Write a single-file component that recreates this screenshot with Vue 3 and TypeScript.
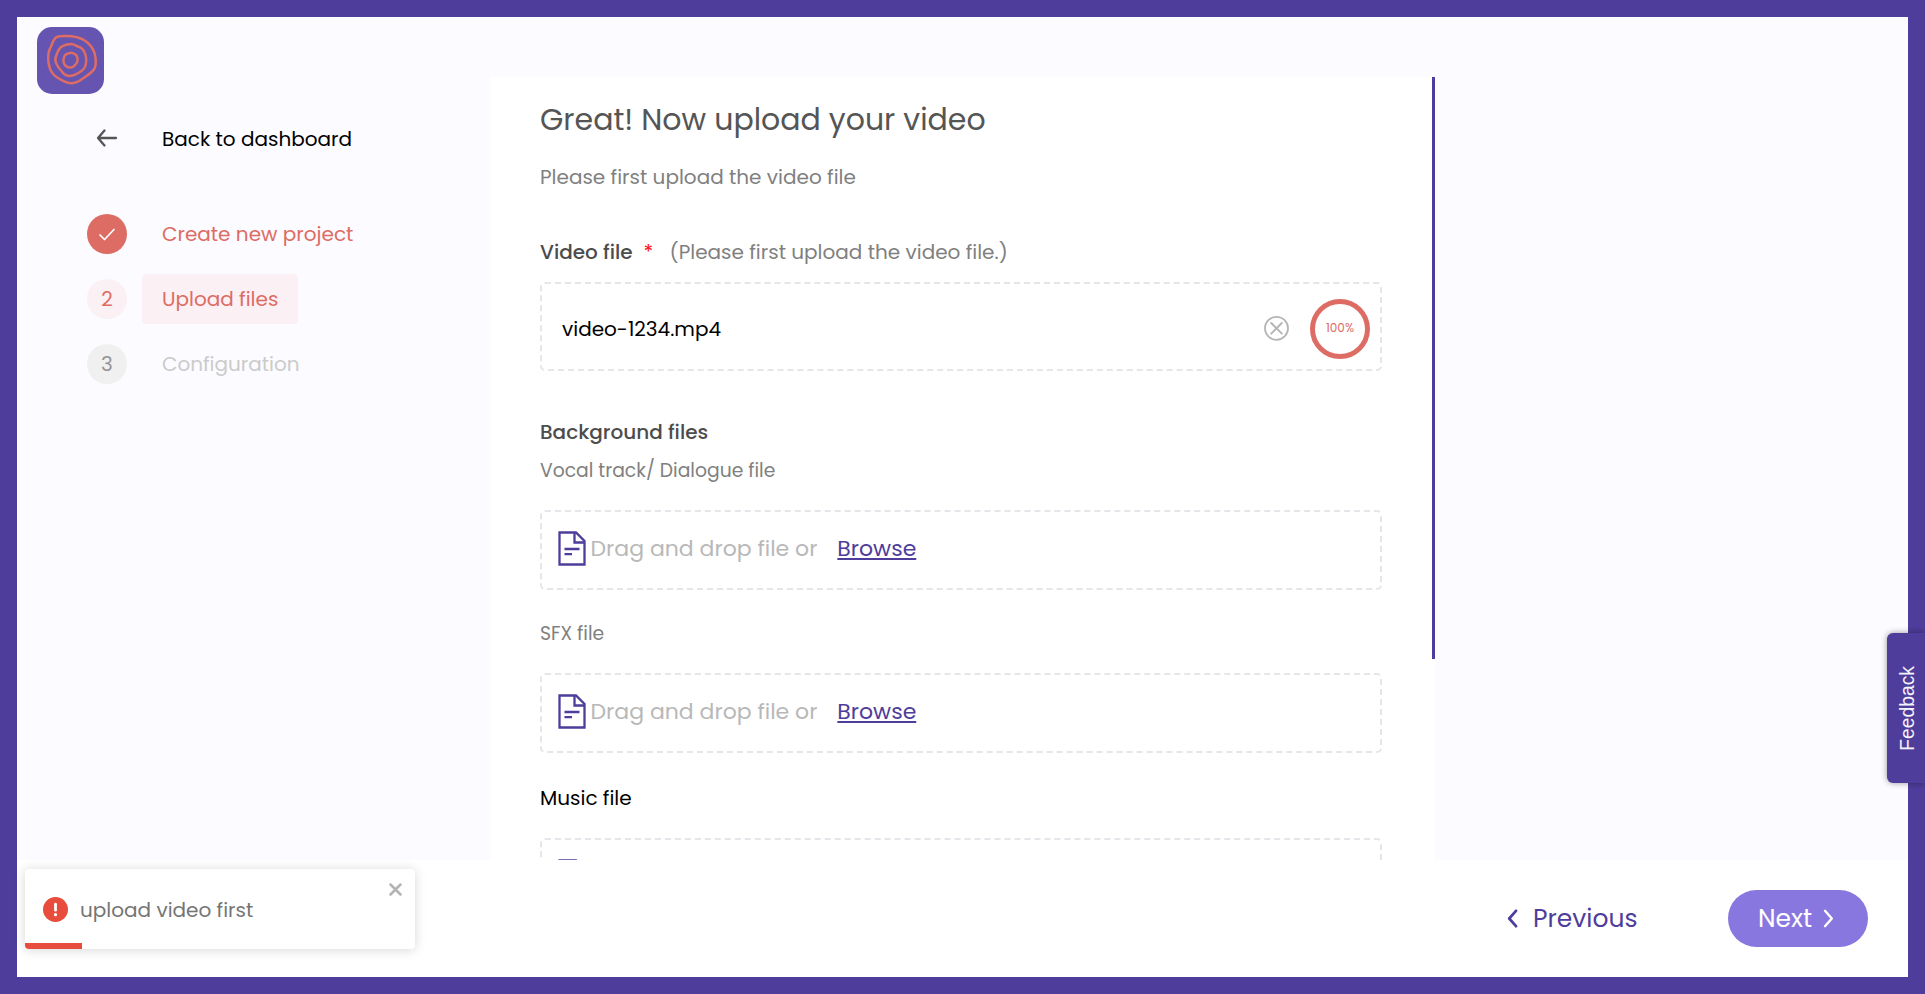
<script setup lang="ts">
interface Step {
  id: number
  label: string
  state: 'done' | 'active' | 'pending'
}

interface Track {
  key: string
  label: string
  prompt: boolean
}

const steps: Step[] = [
  { id: 1, label: 'Create new project', state: 'done' },
  { id: 2, label: 'Upload files', state: 'active' },
  { id: 3, label: 'Configuration', state: 'pending' },
]

const tracks: Track[] = [
  { key: 'vocal', label: 'Vocal track/ Dialogue file', prompt: true },
  { key: 'sfx', label: 'SFX file', prompt: true },
  { key: 'music', label: 'Music file', prompt: false },
]
</script>

<template>
  <div class="frame">
    <div class="main">
      <aside class="sidebar">
        <svg class="logo" viewBox="0 0 67 67">
          <rect width="67" height="67" rx="15" fill="#6554b0" />
          <g fill="none" stroke="#dd6c64" stroke-width="2.5" stroke-linejoin="round">
            <path d="M21 9.500C26 8.500 31 9 35 9.300C41 10 47 12.500 51 16C56 20.500 58 25 58.500 31C59 35 59 39 57.200 42C55 45.500 52 47.500 48 50C43.500 53.500 40 56 34.700 56.300C29 56 25.500 53.500 21 51C17 48.500 14 45.500 12.800 41C11.500 37 11 35 11.200 31C11.300 27 11.500 24 13.300 21C15 18 15.200 15.500 17 12.800C18 11 19 10 21 9.500Z" />
            <path d="M34 17C30 17 27 18 24.300 19.700C21.500 22 20.500 25 19.500 28C18 31 17.800 33 19 36C20.500 39.500 22.500 42 25 44.700C27.500 48 29.500 49 32.500 49C37 48.500 41 46.500 44.700 43.700C48 41.500 48.700 39 49 36C49.500 32 49 28 47.300 24.700C46 22 45 20.700 42 19.900C39 19 37.500 17 34 17Z" />
            <path d="M33.300 25.900C30.500 26.200 28.500 27 27.500 29C26.300 31.500 26.200 34 26.900 36.300C28 39 30.500 40.500 33.300 40.600C36 40.800 37.500 39 39 37C40.300 35.300 40.900 33.500 40.600 31.500C40.300 29.500 39.500 28 38 27.200C36.500 26.200 35 25.700 33.300 25.900Z" />
          </g>
        </svg>

        <nav class="nav">
          <a class="row back">
            <span class="marker">
              <svg width="22" height="20" viewBox="0 0 22 20" fill="none" stroke="#555" stroke-width="2.3" stroke-linecap="round" stroke-linejoin="round">
                <path d="M20 10H2.500M8.500 2.500L2 10L8.500 17.500" />
              </svg>
            </span>
            <span class="label">Back to dashboard</span>
          </a>
          <div v-for="step in steps" :key="step.id" class="row" :class="step.state">
            <span class="marker">
              <svg v-if="step.state === 'done'" width="16" height="13" viewBox="0 0 16 13" fill="none" stroke="#fff" stroke-width="1.700" stroke-linecap="round" stroke-linejoin="round">
                <path d="M1 7L5.500 11.500L15 1.500" />
              </svg>
              <template v-else>{{ step.id }}</template>
            </span>
            <span class="label">{{ step.label }}</span>
          </div>
        </nav>
      </aside>

      <section class="panel">
        <h1>Great! Now upload your video</h1>
        <p class="sub">Please first upload the video file</p>

        <div class="field-title">
          <strong>Video file</strong>
          <span class="star">*</span>
          <span class="hint">(Please first upload the video file.)</span>
        </div>
        <div class="box uploaded">
          <span class="filename">video-1234.mp4</span>
          <svg class="remove" width="25" height="26" viewBox="0 0 25 26" fill="none" stroke="#b5b5b5" stroke-linecap="round">
            <circle cx="12.500" cy="13.300" r="11.500" stroke-width="1.800" />
            <path d="M7.200 8L17.800 18.600M17.800 8L7.200 18.600" stroke-width="1.900" />
          </svg>
          <span class="ring">100%</span>
        </div>

        <strong class="group">Background files</strong>
        <div v-for="track in tracks" :key="track.key" class="track" :class="track.key">
          <div class="track-label">{{ track.label }}</div>
          <div class="box drop">
            <svg width="28" height="35" viewBox="0 0 28 35" fill="none" stroke="#4f3d9b" stroke-width="2.300">
              <path d="M1.500 1.500H18L26.500 10V33.500H1.500Z" />
              <path d="M16.500 1.500V11.500H26.500" />
              <path d="M6.500 18H21.500M6.500 23.200H14" />
            </svg>
            <template v-if="track.prompt">
              <span class="drag">Drag and drop file or</span>
              <a class="browse">Browse</a>
            </template>
          </div>
        </div>
        <i class="thumb"></i>
      </section>
    </div>

    <footer class="footer">
      <button class="prev">
        <svg width="11" height="19" viewBox="0 0 11 19" fill="none" stroke="#4f3d9b" stroke-width="2.700" stroke-linecap="round" stroke-linejoin="round">
          <path d="M9 1.800L2.200 9.500L9 17.200" />
        </svg>
        <span>Previous</span>
      </button>
      <button class="next">
        <span>Next</span>
        <svg width="11" height="19" viewBox="0 0 11 19" fill="none" stroke="#fff" stroke-width="2.400" stroke-linecap="round" stroke-linejoin="round">
          <path d="M2 1.800L8.800 9.500L2 17.200" />
        </svg>
      </button>
    </footer>

    <div class="feedback"><span>Feedback</span></div>

    <div class="toast">
      <svg width="25" height="25" viewBox="0 0 25 25">
        <circle cx="12.500" cy="12.500" r="12.500" fill="#e74c3c" />
        <path d="M12.500 7.200V13.200" stroke="#fff" stroke-width="2.800" stroke-linecap="round" />
        <circle cx="12.500" cy="17.700" r="1.600" fill="#fff" />
      </svg>
      <span class="toast-text">upload video first</span>
      <svg class="close" width="13" height="13" viewBox="0 0 13 13" stroke="#b3b3b3" stroke-width="2.500" stroke-linecap="round">
        <path d="M1.500 1.500L11.500 11.500M11.500 1.500L1.500 11.500" />
      </svg>
      <i class="progress"></i>
    </div>
  </div>
</template>

<style>
body {
  margin: 0;
  overflow: hidden;
}
</style>

<style scoped>
.frame {
  position: relative;
  box-sizing: border-box;
  width: 1925px;
  height: 994px;
  border: 17px solid #4f3d9b;
  background: #fff;
  font-family: Poppins, Inter, "Open Sans", sans-serif;
  font-size: 20px;
  color: #000;
  white-space: nowrap;
}
.main {
  display: flex;
  height: 843px;
  background: #fcfbff;
}
.sidebar {
  width: 473px;
}
.logo {
  display: block;
  width: 67px;
  height: 67px;
  margin: 10px 0 0 20px;
}
.nav {
  display: flex;
  flex-direction: column;
  gap: 15px;
  margin: 19px 0 0 70px;
}
.row {
  display: flex;
  align-items: center;
  gap: 15px;
  height: 50px;
}
.back {
  margin-bottom: 16px;
  padding-bottom: 15px;
}
.back .label {
  padding-top: 1px;
}
.marker {
  display: flex;
  align-items: center;
  justify-content: center;
  width: 40px;
  height: 40px;
  border-radius: 50%;
}
.label {
  box-sizing: border-box;
  height: 50px;
  padding: 0 20px;
  border-radius: 4px;
  line-height: 50px;
}
.done .marker {
  background: #dd6c64;
}
.done .label {
  color: #dd6c64;
}
.active .marker,
.active .label {
  background: #fbf0f3;
  color: #dd6c64;
}
.pending .marker {
  background: #f0f0f0;
  color: #949494;
}
.pending .label {
  color: #cbcbcb;
}
.panel {
  position: relative;
  box-sizing: border-box;
  width: 945px;
  margin-top: 60px;
  padding: 20px 53px 0 50px;
  overflow: hidden;
  background: #fff;
}
h1 {
  margin: 0;
  font-size: 30px;
  font-weight: 400;
  line-height: 45px;
  color: #555;
}
.sub {
  margin: 20px 0 45px;
  line-height: 30px;
  color: #808080;
}
.field-title {
  display: flex;
  margin-bottom: 15px;
  line-height: 30px;
}
strong {
  font-weight: 500;
  color: #4c4c4c;
}
.star {
  width: 26px;
  margin-left: 11px;
  color: #f11;
}
.hint {
  color: #808080;
}
.box {
  box-sizing: border-box;
  display: flex;
  align-items: center;
  border: 2px dashed #e5e5ea;
  border-radius: 5px;
}
.uploaded {
  height: 89px;
  padding: 3px 10px 0 20px;
}
.filename {
  margin-top: 2px;
}
.remove {
  margin: 0 21.500px 0 auto;
}
.ring {
  box-sizing: border-box;
  width: 60px;
  height: 60px;
  margin-top: 2px;
  border: 5px solid #dd6c64;
  border-radius: 50%;
  line-height: 48px;
  text-align: center;
  font-size: 12px;
  color: #dd6c64;
}
.group {
  display: block;
  margin: 46px 0 10px;
  line-height: 30px;
}
.track {
  margin-bottom: 30px;
}
.track-label {
  margin-bottom: 26px;
  font-size: 18.750px;
  line-height: 27px;
  color: #808080;
}
.music .track-label {
  margin-bottom: 25px;
  font-size: 20px;
  line-height: 30px;
  color: #000;
}
.drop {
  height: 80px;
  padding: 0 0 3px 15.500px;
  font-size: 22px;
}
.drag {
  margin-left: 5px;
  color: #b8b8b8;
}
.browse {
  margin-left: 20px;
  color: #4f3d9b;
  text-decoration: underline;
  text-decoration-thickness: 2px;
  text-underline-offset: 2px;
}
.thumb {
  position: absolute;
  top: 0;
  right: 0;
  width: 3px;
  height: 582px;
  background: #4f3d9b;
}
.footer {
  box-sizing: border-box;
  display: flex;
  align-items: center;
  justify-content: flex-end;
  height: 117px;
  padding-right: 40px;
}
button {
  display: flex;
  align-items: center;
  padding: 0;
  border: 0;
  background: none;
  font: inherit;
  font-size: 25px;
  color: #4f3d9b;
}
.prev svg {
  margin-right: 15px;
}
.prev {
  width: 221px;
}
.next {
  box-sizing: border-box;
  width: 140px;
  height: 57px;
  padding-left: 30px;
  border-radius: 29px;
  background: #8977e0;
  color: #fff;
}
.next svg {
  margin-left: 11px;
}
.feedback {
  position: absolute;
  top: 616px;
  right: -17px;
  box-sizing: border-box;
  display: flex;
  align-items: center;
  justify-content: center;
  width: 38px;
  height: 150px;
  padding: 0 0 0 4px;
  border-radius: 6px 0 0 6px;
  background: #4f3d9b;
  box-shadow: 0 0 6px rgba(0, 0, 0, 0.4);
  color: #f4f2fa;
  font-family: "Liberation Sans", Arial, sans-serif;
  font-size: 19.300px;
}
.feedback span {
  writing-mode: vertical-rl;
  transform: rotate(180deg);
}
.toast {
  position: absolute;
  left: 8px;
  top: 852px;
  box-sizing: border-box;
  display: flex;
  align-items: center;
  width: 390px;
  height: 80px;
  padding: 1px 13px 0 18px;
  border-radius: 4px;
  overflow: hidden;
  background: #fff;
  box-shadow: 0 1px 12px rgba(0, 0, 0, 0.16);
}
.toast-text {
  margin-left: 12px;
  color: #757575;
}
.close {
  align-self: flex-start;
  margin: 13px 0 0 auto;
}
.progress {
  position: absolute;
  left: 0;
  bottom: 0;
  width: 57px;
  height: 6px;
  background: #e74c3c;
}
</style>
